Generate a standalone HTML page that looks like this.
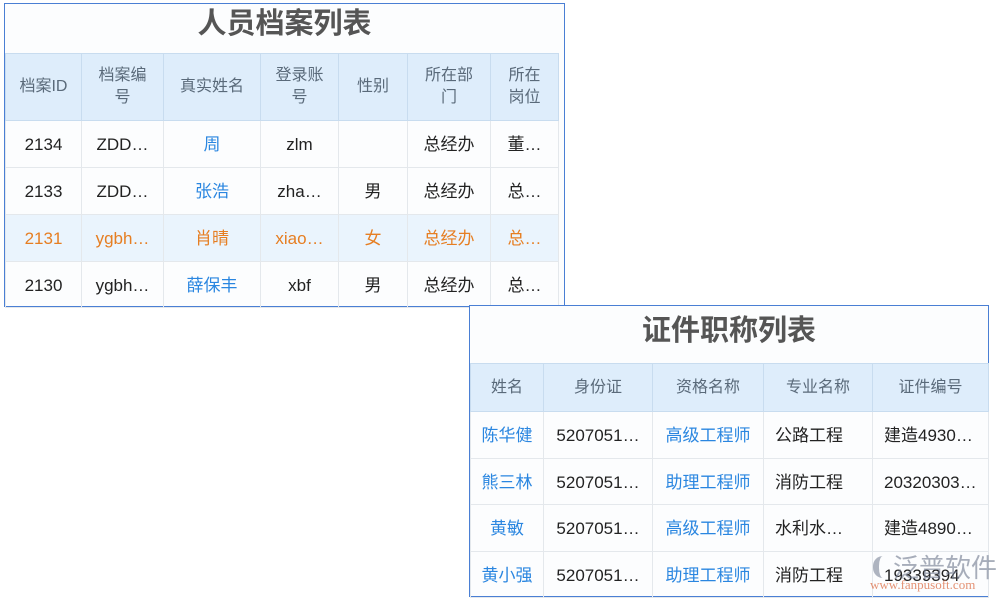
<!DOCTYPE html>
<html><head><meta charset="utf-8"><style>
body{margin:0;width:1000px;height:600px;background:#fff;position:relative;overflow:hidden;font-family:"Liberation Sans","Noto Sans CJK SC",sans-serif;}
.box{position:absolute;border:1px solid #4a7fd4;background:#fcfdfe;box-sizing:border-box;}
.title{position:absolute;left:0;right:0;text-align:center;font-weight:bold;color:#555;font-size:29px;line-height:40px;}
table{position:absolute;border-collapse:collapse;table-layout:fixed;font-size:17px;}
td,th{border:1px solid #e4e8ec;text-align:center;padding:0;overflow:hidden;white-space:nowrap;color:#222;font-weight:normal;line-height:20px;vertical-align:middle;}
td{padding-top:2px;}
th{background:#deedfb;color:#5a6a7a;border-color:#c8dcef;line-height:22px;white-space:normal;font-size:16px;}
tr.hl td{background:#eaf4fd;color:#e67e22;}
.b{color:#2a86e0;}
.l{text-align:left;padding-left:11px;}
</style></head><body>
<div class="box" style="left:4px;top:3px;width:561px;height:304px;">
<div class="title" style="top:0px;">人员档案列表</div>
<table style="left:0;top:49px;width:553px;">
<colgroup><col style="width:76px"><col style="width:82px"><col style="width:97px"><col style="width:78px"><col style="width:69px"><col style="width:83px"><col style="width:68px"></colgroup>
<tr style="height:67px"><th>档案ID</th><th>档案编<br>号</th><th>真实姓名</th><th>登录账<br>号</th><th>性别</th><th>所在部<br>门</th><th>所在<br>岗位</th></tr>
<tr style="height:47px"><td>2134</td><td>ZDD…</td><td class="b">周</td><td>zlm</td><td></td><td>总经办</td><td>董…</td></tr>
<tr style="height:47px"><td>2133</td><td>ZDD…</td><td class="b">张浩</td><td>zha…</td><td>男</td><td>总经办</td><td>总…</td></tr>
<tr class="hl" style="height:47px"><td>2131</td><td>ygbh…</td><td>肖晴</td><td>xiao…</td><td>女</td><td>总经办</td><td>总…</td></tr>
<tr style="height:46px"><td>2130</td><td>ygbh…</td><td class="b">薛保丰</td><td>xbf</td><td>男</td><td>总经办</td><td>总…</td></tr>
</table></div>
<div class="box" style="left:469px;top:305px;width:520px;height:292px;">
<div class="title" style="top:5px;">证件职称列表</div>
<table style="left:0;top:57px;width:518px;">
<colgroup><col style="width:73px"><col style="width:109px"><col style="width:111px"><col style="width:109px"><col style="width:116px"></colgroup>
<tr style="height:48px"><th>姓名</th><th>身份证</th><th>资格名称</th><th>专业名称</th><th>证件编号</th></tr>
<tr style="height:47px"><td class="b">陈华健</td><td>5207051…</td><td class="b">高级工程师</td><td class="l">公路工程</td><td class="l">建造4930…</td></tr>
<tr style="height:46px"><td class="b">熊三林</td><td>5207051…</td><td class="b">助理工程师</td><td class="l">消防工程</td><td class="l">20320303…</td></tr>
<tr style="height:47px"><td class="b">黄敏</td><td>5207051…</td><td class="b">高级工程师</td><td class="l">水利水…</td><td class="l">建造4890…</td></tr>
<tr style="height:46px"><td class="b">黄小强</td><td>5207051…</td><td class="b">助理工程师</td><td class="l">消防工程</td><td class="l">19339394</td></tr>
</table></div>
<div style="position:absolute;left:873px;top:556px;width:20px;height:22px;border-radius:10px 0 0 10px;border-left:6px solid rgba(110,120,140,0.55);box-sizing:border-box;"></div>
<div style="position:absolute;left:893px;top:548px;font-size:26px;color:rgba(110,120,140,0.6);">泛普软件</div>
<div style="position:absolute;left:870px;top:577px;font-size:13px;color:rgba(220,110,70,0.75);font-family:'Liberation Serif',serif;">www.fanpusoft.com</div>
</body></html>
